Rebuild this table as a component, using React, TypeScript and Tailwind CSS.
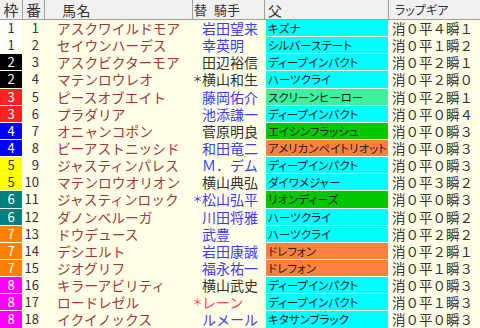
import React from "react";

type Row = {
  w: number;
  n: number;
  name: string;
  star?: boolean;
  jc: "b" | "k" | "r";
  j: string;
  f: string;
  fc: "c" | "m" | "g" | "o";
  lap: string;
};

const rows: Row[] = [
  { w: 1, n: 1, name: "アスクワイルドモア", jc: "b", j: "岩田望来", f: "キズナ", fc: "c", lap: "消０平４瞬１" },
  { w: 1, n: 2, name: "セイウンハーデス", jc: "b", j: "幸英明", f: "シルバーステート", fc: "c", lap: "消０平１瞬２" },
  { w: 2, n: 3, name: "アスクビクターモア", jc: "k", j: "田辺裕信", f: "ディープインパクト", fc: "c", lap: "消０平２瞬１" },
  { w: 2, n: 4, name: "マテンロウレオ", star: true, jc: "k", j: "横山和生", f: "ハーツクライ", fc: "c", lap: "消０平２瞬０" },
  { w: 3, n: 5, name: "ピースオブエイト", jc: "b", j: "藤岡佑介", f: "スクリーンヒーロー", fc: "m", lap: "消０平２瞬１" },
  { w: 3, n: 6, name: "プラダリア", jc: "b", j: "池添謙一", f: "ディープインパクト", fc: "c", lap: "消０平０瞬４" },
  { w: 4, n: 7, name: "オニャンコポン", jc: "k", j: "菅原明良", f: "エイシンフラッシュ", fc: "g", lap: "消０平０瞬３" },
  { w: 4, n: 8, name: "ビーアストニッシド", jc: "b", j: "和田竜二", f: "アメリカンペイトリオット", fc: "o", lap: "消０平０瞬３" },
  { w: 5, n: 9, name: "ジャスティンパレス", jc: "b", j: "Ｍ．デム", f: "ディープインパクト", fc: "c", lap: "消０平０瞬３" },
  { w: 5, n: 10, name: "マテンロウオリオン", jc: "k", j: "横山典弘", f: "ダイワメジャー", fc: "c", lap: "消０平３瞬２" },
  { w: 6, n: 11, name: "ジャスティンロック", star: true, jc: "b", j: "松山弘平", f: "リオンディーズ", fc: "g", lap: "消０平０瞬３" },
  { w: 6, n: 12, name: "ダノンベルーガ", jc: "b", j: "川田将雅", f: "ハーツクライ", fc: "c", lap: "消０平０瞬２" },
  { w: 7, n: 13, name: "ドウデュース", jc: "b", j: "武豊", f: "ハーツクライ", fc: "c", lap: "消０平２瞬２" },
  { w: 7, n: 14, name: "デシエルト", jc: "b", j: "岩田康誠", f: "ドレフォン", fc: "o", lap: "消０平２瞬１" },
  { w: 7, n: 15, name: "ジオグリフ", jc: "b", j: "福永祐一", f: "ドレフォン", fc: "o", lap: "消０平１瞬３" },
  { w: 8, n: 16, name: "キラーアビリティ", jc: "k", j: "横山武史", f: "ディープインパクト", fc: "c", lap: "消０平０瞬３" },
  { w: 8, n: 17, name: "ロードレゼル", star: true, jc: "r", j: "レーン", f: "ディープインパクト", fc: "c", lap: "消０平１瞬３" },
  { w: 8, n: 18, name: "イクイノックス", jc: "b", j: "ルメール", f: "キタサンブラック", fc: "c", lap: "消０平０瞬３" },
];

const frameCls: Record<number, string> = {
  1: "bg-white text-[#333]",
  2: "bg-black text-white",
  3: "bg-[#ff2020] text-white",
  4: "bg-[#0000ff] text-white",
  5: "bg-[#ffff00] text-[#333]",
  6: "bg-[#008080] text-white",
  7: "bg-[#ff8000] text-white",
  8: "bg-[#ff00ff] text-white",
};

const jockeyCls: Record<string, string> = {
  b: "text-[#3c3cff]",
  k: "text-[#333333]",
  r: "text-[#ff4060]",
};

const fatherCls: Record<string, string> = {
  c: "bg-[#00ffff]",
  m: "bg-[#3cf09c]",
  g: "bg-[#00c800]",
  o: "bg-[#ff8040]",
};

export default function App() {
  return (
    <div className="w-[480px] h-[328px] overflow-hidden bg-[#ffffe8] font-['Noto_Sans_CJK_JP',sans-serif] leading-[16px]">
      {/* header */}
      <div className="flex h-[20px] bg-[#f0f0f0] border-b border-[#a0a0a0] text-[#333]">
        <div className="w-[23px] border-r border-[#a0a0a0] flex items-center justify-center text-[15px]">枠</div>
        <div className="w-[22px] border-r border-[#a0a0a0] flex items-center justify-center text-[15px]">番</div>
        <div className="w-[148px] border-r border-[#a0a0a0] flex items-center pl-[17px] text-[14px] tracking-[0.5px]">馬名</div>
        <div className="w-[72px] border-r border-[#a0a0a0] flex items-center pl-[1px] text-[13px]">
          <span>替</span>
          <span className="ml-[7px]">騎手</span>
        </div>
        <div className="w-[124px] border-r border-[#a0a0a0] flex items-center pl-[3px] text-[14px]">父</div>
        <div className="flex-1 flex items-center pl-[6px] text-[12px] [font-feature-settings:'palt']">ラップギア</div>
      </div>
      {/* rows */}
      {rows.map((r) => (
        <div key={r.n} className="flex h-[17.15px] pb-px">
          <div className={`w-[22px] flex items-center justify-center text-[13px] ${frameCls[r.w]}`}>{r.w}</div>
          <div className="w-[23px] flex items-center justify-end pr-[6px] text-[13px] text-[#333]">{r.n}</div>
          <div className="w-[148px] flex items-center pl-[12px] text-[13.7px] text-[#a03838] whitespace-nowrap">
            {r.name}
          </div>
          <div className={`w-[73px] flex items-center text-[14px] whitespace-nowrap ${jockeyCls[r.jc]}`}>
            <span className="w-[9px] flex justify-center text-[10px]">{r.star ? "＊" : ""}</span>
            <span>{r.j}</span>
          </div>
          <div className={`w-[122px] mr-px flex items-center pl-[2px] text-[11.5px] text-[#202020] whitespace-nowrap overflow-hidden [font-feature-settings:'palt'] ${fatherCls[r.fc]}`}>
            {r.f}
          </div>
          <div className="flex-1 flex items-center pl-[3px] text-[13.5px] text-[#333] whitespace-nowrap">{r.lap}</div>
        </div>
      ))}
    </div>
  );
}
